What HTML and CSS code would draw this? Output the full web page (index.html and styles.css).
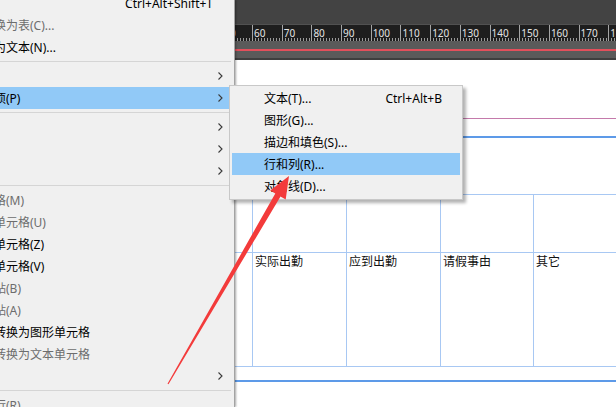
FILE: index.html
```html
<!DOCTYPE html>
<html lang="zh-CN">
  <head>
    <meta charset="UTF-8" />
    <title>表 - 单元格选项</title>
    <link rel="stylesheet" href="styles.css">
  </head>
  <body>
    <div class="app">
      <div class="menu">
        <div class="menu-item first"><span class="label">创建表...</span><span class="key">Ctrl+Alt+Shift+T</span><span class="arrow"></span></div>
        <div class="menu-item disabled"><span class="label">将文本转换为表(C)...</span><span class="arrow"></span></div>
        <div class="menu-item"><span class="label">将表转换为文本(N)...</span><span class="arrow"></span></div>
        <div class="separator"></div>
        <div class="menu-item"><span class="label">表选项</span><span class="arrow"><svg width="5" height="8" viewBox="0 0 5 8"><polyline points="0.5,0.5 4,4 0.5,7.5" /></svg></span></div>
        <div class="menu-item active"><span class="label">单元格选项(P)</span><span class="arrow"><svg width="5" height="8" viewBox="0 0 5 8"><polyline points="0.5,0.5 4,4 0.5,7.5" /></svg></span></div>
        <div class="separator"></div>
        <div class="menu-item"><span class="label">插入(I)</span><span class="arrow"><svg width="5" height="8" viewBox="0 0 5 8"><polyline points="0.5,0.5 4,4 0.5,7.5" /></svg></span></div>
        <div class="menu-item"><span class="label">删除(D)</span><span class="arrow"><svg width="5" height="8" viewBox="0 0 5 8"><polyline points="0.5,0.5 4,4 0.5,7.5" /></svg></span></div>
        <div class="menu-item"><span class="label">选择(S)</span><span class="arrow"><svg width="5" height="8" viewBox="0 0 5 8"><polyline points="0.5,0.5 4,4 0.5,7.5" /></svg></span></div>
        <div class="separator"></div>
        <div class="menu-item disabled"><span class="label">合并单元格(M)</span><span class="arrow"></span></div>
        <div class="menu-item disabled"><span class="label">取消合并单元格(U)</span><span class="arrow"></span></div>
        <div class="menu-item"><span class="label">水平拆分单元格(Z)</span><span class="arrow"></span></div>
        <div class="menu-item"><span class="label">垂直拆分单元格(V)</span><span class="arrow"></span></div>
        <div class="menu-item disabled"><span class="label">在前面粘贴(B)</span><span class="arrow"></span></div>
        <div class="menu-item disabled"><span class="label">在后面粘贴(A)</span><span class="arrow"></span></div>
        <div class="menu-item"><span class="label">将单元格转换为图形单元格</span><span class="arrow"></span></div>
        <div class="menu-item disabled"><span class="label">将单元格转换为文本单元格</span><span class="arrow"></span></div>
        <div class="menu-item"><span class="label">转至行</span><span class="arrow"><svg width="5" height="8" viewBox="0 0 5 8"><polyline points="0.5,0.5 4,4 0.5,7.5" /></svg></span></div>
        <div class="separator"></div>
        <div class="menu-item disabled"><span class="label">均匀分布行(R)</span><span class="arrow"></span></div>
      </div>

      <div class="canvas">
        <div class="topbar"></div>
        <div class="ruler">
          <span class="ruler-seg first">50</span>
          <span class="ruler-seg">60</span>
          <span class="ruler-seg">70</span>
          <span class="ruler-seg">80</span>
          <span class="ruler-seg">90</span>
          <span class="ruler-seg">100</span>
          <span class="ruler-seg">110</span>
          <span class="ruler-seg">120</span>
          <span class="ruler-seg">130</span>
          <span class="ruler-seg">140</span>
          <span class="ruler-seg">150</span>
          <span class="ruler-seg">160</span>
          <span class="ruler-seg">170</span>
          <span class="ruler-seg">180</span>
        </div>
        <div class="pasteboard"><div class="bleed"></div></div>
        <div class="page">
          <div class="guide-pink"></div>
          <div class="guide-blue"></div>
          <div class="table">
            <div class="cell top"></div>
            <div class="cell top"></div>
            <div class="cell top"></div>
            <div class="cell top"></div>
            <div class="cell top"></div>
            <div class="cell"></div>
            <div class="cell">实际出勤</div>
            <div class="cell">应到出勤</div>
            <div class="cell">请假事由</div>
            <div class="cell">其它</div>
          </div>
          <div class="guide-blue bottom"></div>
        </div>
      </div>

      <div class="submenu">
        <div class="sub-item"><span>文本(T)...</span><span>Ctrl+Alt+B</span></div>
        <div class="sub-item"><span>图形(G)...</span></div>
        <div class="sub-item"><span>描边和填色(S)...</span></div>
        <div class="sub-item active"><span>行和列(R)...</span></div>
        <div class="sub-item"><span>对角线(D)...</span></div>
      </div>

      <svg class="pointer" width="616" height="407" viewBox="0 0 616 407">
        <polygon points="289,176 285.7,199.5 280.5,196.5 168.5,384.3 167.5,383.7 275.3,193.5 270.1,190.5" />
      </svg>
    </div>
  </body>
</html>
```

FILE: styles.css
```css
body {
  margin: 0;
  overflow: hidden;
  background: #f0f0f0;
  font-family: "Noto Sans", "Noto Sans CJK SC", sans-serif;
  font-size: 12px;
}

.app {
  position: relative;
  width: 616px;
  height: 407px;
  display: flex;
  overflow: hidden;
}

/* main dropdown */
.menu {
  flex: 0 0 235px;
  box-sizing: border-box;
  background: #f0f0f0;
  border-right: 1px solid #a3a3a3;
  box-shadow: 1px 0 2px rgba(0, 0, 0, 0.35);
  overflow: hidden;
  z-index: 2;
}

.menu-item {
  display: flex;
  align-items: center;
  height: 22px;
  margin-right: 2px;
  color: #000;
  white-space: nowrap;
}

.menu-item.first {
  margin-top: -8px;
}

.menu-item.disabled {
  color: #6d6d6d;
}

.menu-item.active {
  background: #91c9f7;
}

.label {
  flex: 1 1 auto;
  min-width: 0;
  margin-left: -54px;
}

.key {
  flex: 0 0 auto;
}

.arrow {
  flex: 0 0 19px;
  box-sizing: border-box;
  padding-left: 5px;
  display: flex;
  align-items: center;
}

.arrow polyline {
  fill: none;
  stroke: #3a3a3a;
  stroke-width: 1.1;
}

.separator {
  height: 7px;
  margin-right: 3px;
  display: flex;
  align-items: center;
}

.separator::before {
  content: "";
  flex: 1;
  height: 1px;
  background: #d5d5d5;
}

/* document side */
.canvas {
  flex: 1;
  display: flex;
  flex-direction: column;
  min-width: 0;
}

.topbar {
  height: 25px;
  box-sizing: border-box;
  background: #434343;
  border-bottom: 1px solid #515151;
}

.ruler {
  height: 16px;
  display: flex;
  background: #1e1e1e;
  overflow: hidden;
}

.ruler-seg {
  flex: 0 0 29.7px;
  box-sizing: border-box;
  border-left: 1px solid #a5a5a5;
  padding: 2px 0 0 1px;
  font-size: 10px;
  line-height: 12px;
  color: #e4e4e4;
  background: repeating-linear-gradient(to right, #9a9a9a 0 1px, transparent 1px 2.97px) left bottom / 100% 3px no-repeat;
  background-origin: border-box;
}

.ruler-seg.first {
  margin-left: -12.7px;
}

.pasteboard {
  height: 17px;
  background: #5a5a5a;
  border-bottom: 2px solid #3e3e3e;
}

.bleed {
  margin-top: 8px;
  height: 2px;
  background: #e34f5b;
}

.page {
  flex: 1;
  background: #fff;
  overflow: hidden;
}

.guide-pink {
  margin-top: 58px;
  height: 1px;
  background: #c47aab;
}

.guide-blue {
  margin-top: 17px;
  height: 2px;
  background: #5d9ae8;
}

.guide-blue.bottom {
  margin-top: 13px;
}

.table {
  margin-top: 56px;
  display: grid;
  grid-template-columns: 17px 94px 94px 93px 1fr;
  border-top: 1px solid #a8c8f3;
}

.cell {
  height: 114px;
  box-sizing: border-box;
  border-bottom: 1px solid #a8c8f3;
  border-left: 1px solid #a8c8f3;
  padding: 1px 0 0 2px;
  font-family: "Noto Sans CJK SC", sans-serif;
  font-size: 12px;
  line-height: 14px;
  color: #111;
}

.cell.top {
  height: 58px;
}

.cell:nth-child(5n + 1) {
  border-left: none;
}

/* cascading submenu */
.submenu {
  position: absolute;
  left: 229px;
  top: 85px;
  width: 234px;
  box-sizing: border-box;
  padding: 1px 2px 2px;
  background: #f0f0f0;
  border: 1px solid #c8c8c8;
  box-shadow: 3px 3px 3px rgba(0, 0, 0, 0.3);
  z-index: 3;
}

.sub-item {
  display: flex;
  justify-content: space-between;
  align-items: center;
  height: 22px;
  padding: 0 18px 0 32px;
  color: #000;
  white-space: nowrap;
}

.sub-item.active {
  background: #91c9f7;
}

.pointer {
  position: absolute;
  left: 0;
  top: 0;
  pointer-events: none;
  z-index: 4;
}

.pointer polygon {
  fill: #f33b3b;
}
```
